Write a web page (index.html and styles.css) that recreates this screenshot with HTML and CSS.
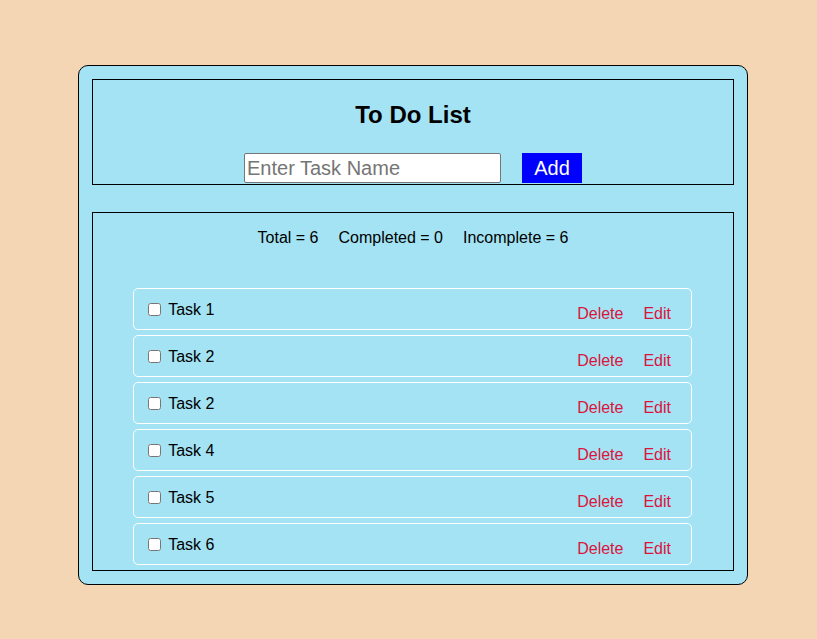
FILE: index.html
```html
<!DOCTYPE html>
<html lang="en">
<head>
<meta charset="utf-8">
<title>To Do List</title>
<link rel="stylesheet" href="styles.css">
</head>
<body>
<div class="app">
  <div class="header-box">
    <h2 class="title">To Do List</h2>
    <div class="add-row">
      <input class="task-input" type="text" placeholder="Enter Task Name">
      <button class="add-btn">Add</button>
    </div>
  </div>
  <div class="list-box">
    <div class="stats">
      <span>Total = 6</span>
      <span>Completed = 0</span>
      <span>Incomplete = 6</span>
    </div>
    <ul class="tasks">
      <li class="task"><label class="task-label"><input type="checkbox"> Task 1</label><span class="actions"><span class="act">Delete</span><span class="act">Edit</span></span></li>
      <li class="task"><label class="task-label"><input type="checkbox"> Task 2</label><span class="actions"><span class="act">Delete</span><span class="act">Edit</span></span></li>
      <li class="task"><label class="task-label"><input type="checkbox"> Task 2</label><span class="actions"><span class="act">Delete</span><span class="act">Edit</span></span></li>
      <li class="task"><label class="task-label"><input type="checkbox"> Task 4</label><span class="actions"><span class="act">Delete</span><span class="act">Edit</span></span></li>
      <li class="task"><label class="task-label"><input type="checkbox"> Task 5</label><span class="actions"><span class="act">Delete</span><span class="act">Edit</span></span></li>
      <li class="task"><label class="task-label"><input type="checkbox"> Task 6</label><span class="actions"><span class="act">Delete</span><span class="act">Edit</span></span></li>
    </ul>
  </div>
</div>
</body>
</html>
```
FILE: styles.css
```css
html, body {
  margin: 0;
  padding: 0;
}
body {
  background: #f5d6b4;
  font-family: "Liberation Sans", Arial, sans-serif;
  font-size: 16px;
  color: #000;
  padding: 65px 0 0 78px;
}
.app {
  width: 642px;
  background: #a3e3f4;
  border: 1px solid #000;
  border-radius: 10px;
  padding: 13px;
}
.header-box {
  border: 1px solid #000;
  padding: 21px 0 1px;
  text-align: center;
}
.title {
  margin: 0 0 25px;
  font-size: 24px;
  line-height: 27px;
  font-weight: bold;
}
.add-row {
  display: flex;
  justify-content: center;
  gap: 21px;
  height: 30px;
}
.task-input {
  box-sizing: border-box;
  width: 257px;
  height: 30px;
  margin: 0;
  border: 1px solid #767676;
  border-radius: 2px;
  padding: 1px 2px;
  font-family: "Liberation Sans", Arial, sans-serif;
  font-size: 20px;
  background: #fff;
}
.task-input::placeholder {
  color: #757575;
}
.add-btn {
  width: 60px;
  height: 30px;
  margin: 0;
  padding: 0;
  border: none;
  background: #0000ff;
  color: #fff;
  font-family: "Liberation Sans", Arial, sans-serif;
  font-size: 20px;
}
.list-box {
  margin-top: 27px;
  border: 1px solid #000;
  padding: 16px 0 0;
}
.stats {
  display: flex;
  justify-content: center;
  gap: 20px;
  line-height: 18px;
}
.tasks {
  list-style: none;
  margin: 41px 0 0;
  padding: 0 0 0 40px;
}
.task {
  box-sizing: border-box;
  width: 559px;
  height: 42px;
  margin-bottom: 5px;
  border: 1px solid #fff;
  border-radius: 5px;
  display: flex;
  justify-content: space-between;
  align-items: flex-start;
  padding: 0 20px 0 10px;
}
.task-label {
  line-height: 18px;
  padding-top: 11px;
}
.task-label input {
  margin: 3px 3px 3px 4px;
  vertical-align: -1px;
}
.actions {
  display: flex;
  gap: 20px;
  line-height: 18px;
  padding-top: 16px;
}
.act {
  color: #dc143c;
}
```
